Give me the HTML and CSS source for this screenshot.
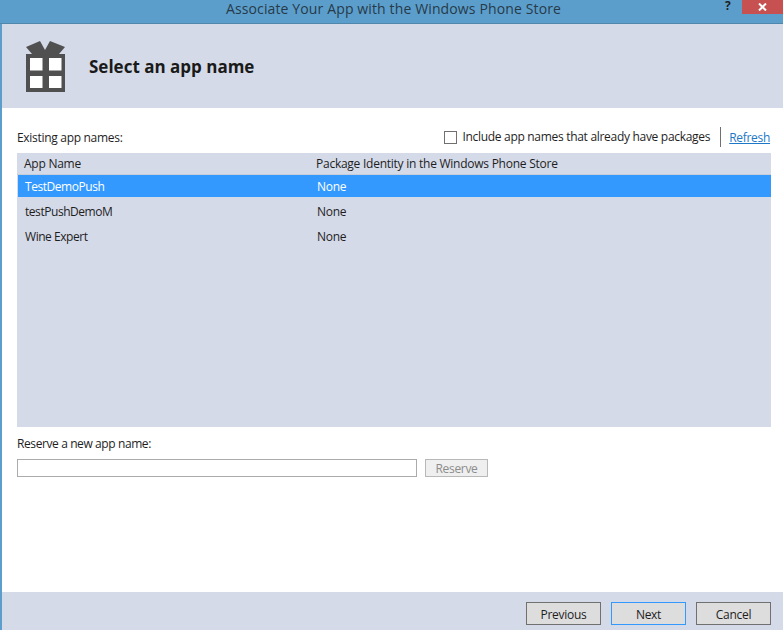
FILE: index.html
```html
<!DOCTYPE html>
<html lang="en">
  <head>
    <meta charset="utf-8" />
    <title>Associate Your App with the Windows Phone Store</title>
    <link rel="stylesheet" href="styles.css">
  </head>
  <body>
    <div class="titlebar">
      <span class="title">Associate Your App with the Windows Phone Store</span>
      <span class="help">?</span>
      <span class="close">
        <svg width="9" height="8" viewBox="0 0 9 8"><path d="M1 0.5L8 7.5M8 0.5L1 7.5" stroke="#fff" stroke-width="2" fill="none"/></svg>
      </span>
    </div>

    <div class="window">
      <div class="banner">
        <svg class="gift" width="40" height="52" viewBox="0 0 40 52">
          <path d="M0 6L14 0L19 9L24 0L39 6L33 13H6Z" fill="#505050"/>
          <path d="M0 13H39V51H0Z" fill="#505050"/>
          <path d="M4 17H16.500V29.500H4ZM23 17H35.500V29.500H23ZM4 35H16.500V47H4ZM23 35H35.500V47H23Z" fill="#fff"/>
        </svg>
        <h1>Select an app name</h1>
      </div>

      <div class="content">
        <div class="list-top">
          <span>Existing app names:</span>
          <div class="list-tools">
            <span class="checkbox"></span>
            <span class="include">Include app names that already have packages</span>
            <a class="refresh" href="#">Refresh</a>
          </div>
        </div>

        <div class="app-list">
          <div class="row head">
            <span class="col-name">App Name</span>
            <span class="col-id">Package Identity in the Windows Phone Store</span>
          </div>
          <div class="row item selected">
            <span class="col-name">TestDemoPush</span>
            <span class="col-id">None</span>
          </div>
          <div class="row item">
            <span class="col-name">testPushDemoM</span>
            <span class="col-id">None</span>
          </div>
          <div class="row item">
            <span class="col-name">Wine Expert</span>
            <span class="col-id">None</span>
          </div>
        </div>

        <p class="reserve-label">Reserve a new app name:</p>
        <div class="reserve">
          <input class="name-input" type="text">
          <button class="reserve-btn" type="button">Reserve</button>
        </div>
      </div>

      <div class="footer">
        <button type="button">Previous</button>
        <button type="button" class="default">Next</button>
        <button type="button">Cancel</button>
      </div>
    </div>
  </body>
</html>
```

FILE: styles.css
```css
html, body {
  height: 100%;
}
body {
  margin: 0;
  display: flex;
  flex-direction: column;
  overflow: hidden;
  background: #fff;
  color: #1e1e1e;
  font-family: "Open Sans", "Noto Sans", sans-serif;
  font-size: 12px;
  letter-spacing: -0.3px;
}
/* Title bar */
.titlebar {
  flex: 0 0 23px;
  display: flex;
  justify-content: center;
  position: relative;
  padding-left: 4px;
  background: #5c9ecb;
  border-bottom: 1px solid #4f86ac;
}
.title {
  font-size: 14px;
  line-height: 18px;
  color: #263a4a;
  letter-spacing: 0.13px;
}
.help {
  position: absolute;
  top: 0;
  left: 725px;
  font-size: 12px;
  font-weight: bold;
  line-height: 12px;
}
.close {
  position: absolute;
  top: 0;
  right: 0;
  width: 41px;
  height: 14px;
  display: flex;
  align-items: center;
  justify-content: center;
  background: #c75050;
}
/* Everything under the title bar */
.window {
  flex: 1;
  display: flex;
  flex-direction: column;
  border-left: 2px solid #5c9ecb;
}
.banner {
  flex: 0 0 84px;
  display: flex;
  align-items: center;
  gap: 23px;
  padding-left: 24px;
  background: #d5dae8;
}
.gift {
  margin-top: 1px;
}
.banner h1 {
  margin: 0;
  font-size: 17px;
  letter-spacing: 0;
  font-weight: bold;
  color: #1a1a1a;
}
.content {
  flex: 1;
  display: flex;
  flex-direction: column;
  padding: 19px 12px 0 15px;
}
.list-top {
  display: flex;
  justify-content: space-between;
  align-items: center;
  height: 20px;
  margin-bottom: 6px;
}
.list-tools {
  display: flex;
  align-items: center;
}
.checkbox {
  width: 11px;
  height: 11px;
  margin-right: 5px;
  border: 1px solid #707070;
  background: #fff;
}
.include {
  padding-right: 10px;
  border-right: 1px solid #707070;
  line-height: 20px;
}
.refresh {
  margin-left: 8px;
  margin-right: 1px;
  color: #1e78c8;
}
.app-list {
  height: 274px;
  background: #d5dae8;
}
.row {
  display: flex;
  align-items: center;
}
.head {
  height: 21px;
  padding-left: 7px;
  border-bottom: 1px solid #c8cdda;
  letter-spacing: -0.25px;
}
.head .col-name {
  width: 292px;
}
.item {
  height: 25px;
  padding-left: 8px;
}
.item .col-name {
  width: 292px;
  letter-spacing: -0.45px;
}
.selected {
  height: 22px;
  margin: 0 0 0 1px;
  padding-left: 7px;
  background: #3399ff;
  color: #fff;
}
.selected + .item {
  margin-top: 2px;
}
.reserve-label {
  margin: 0;
  padding-top: 8px;
  line-height: 17px;
  letter-spacing: -0.4px;
}
.reserve {
  display: flex;
  gap: 8px;
  margin-top: 7px;
}
.name-input {
  box-sizing: border-box;
  width: 400px;
  height: 18px;
  margin: 0;
  border: 1px solid #ababab;
  background: #fff;
}
.reserve-btn {
  box-sizing: border-box;
  width: 63px;
  height: 18px;
  padding: 0;
  border: 1px solid #b8b8b8;
  background: #efefef;
  color: #8c8c8c;
  font: inherit;
  letter-spacing: inherit;
}
.footer {
  flex: 0 0 38px;
  display: flex;
  justify-content: flex-end;
  gap: 10px;
  box-sizing: border-box;
  padding: 10px 12px 0 0;
  background: #d5dae8;
}
.footer button {
  box-sizing: border-box;
  width: 75px;
  height: 23px;
  padding: 1px 0 0;
  border: 1px solid #707070;
  background: #dddddd;
  color: #1e1e1e;
  font: inherit;
  letter-spacing: inherit;
}
.footer .default {
  border-color: #3399ff;
}
```
